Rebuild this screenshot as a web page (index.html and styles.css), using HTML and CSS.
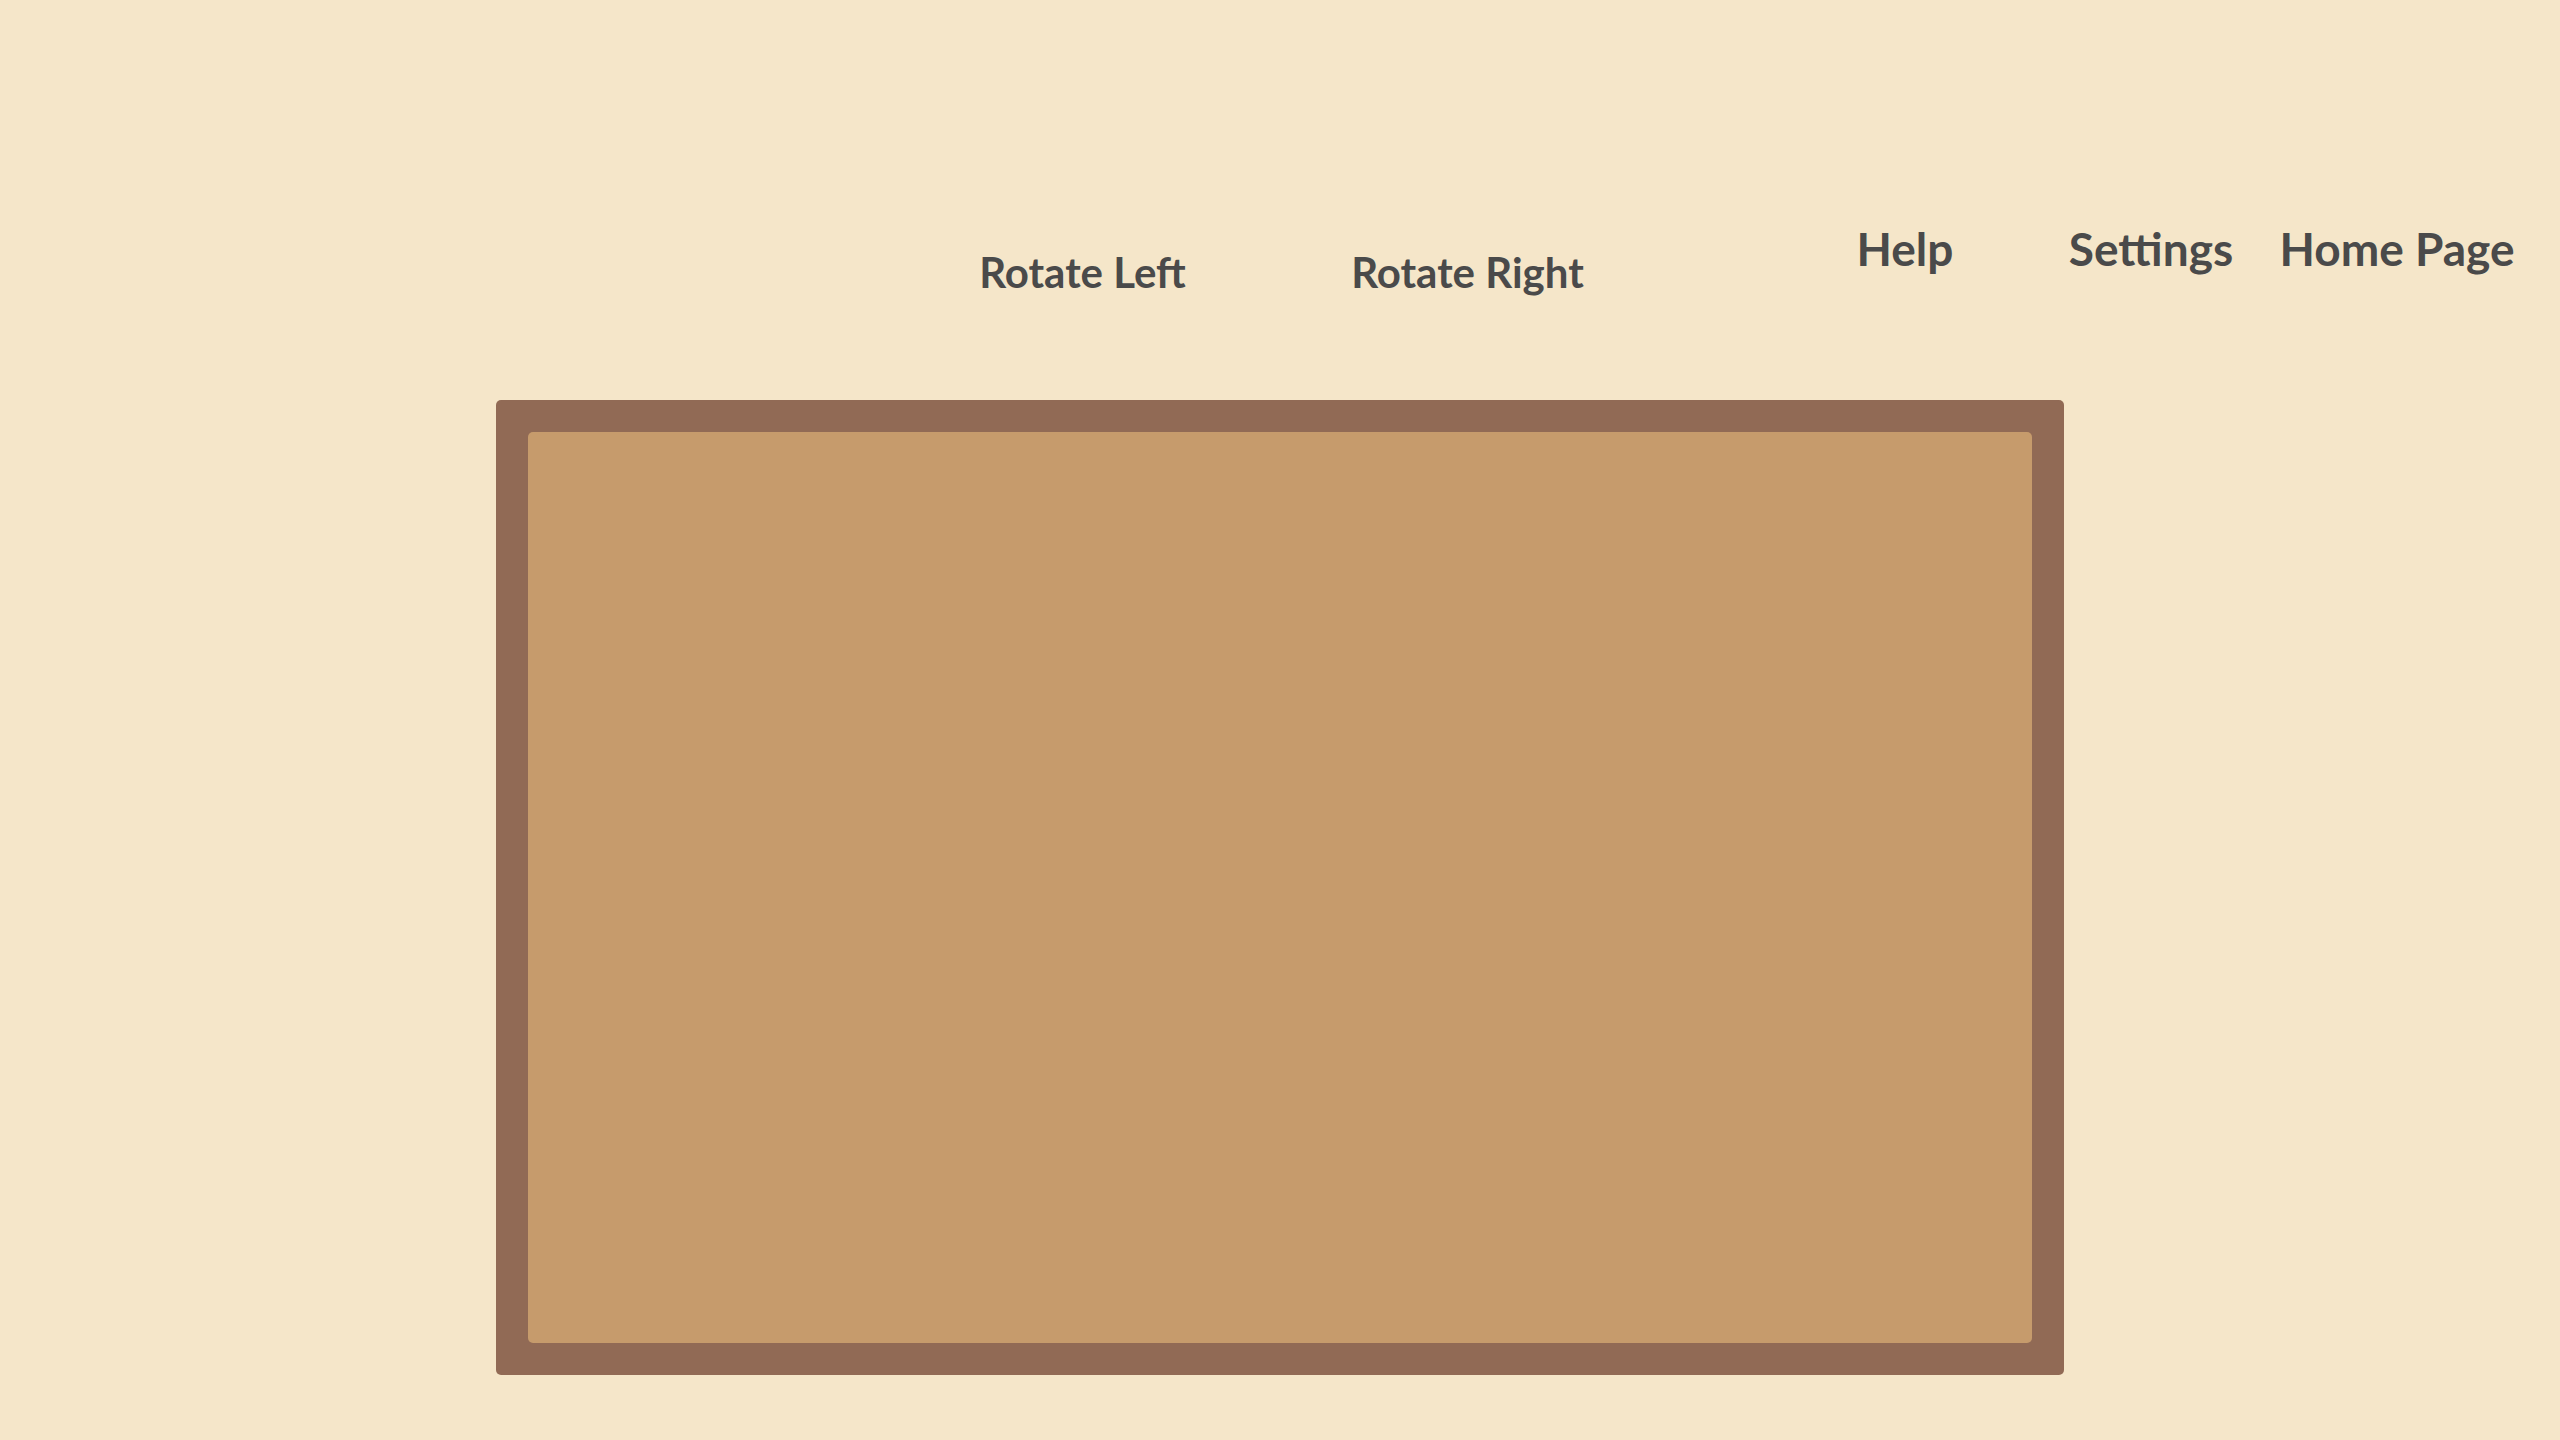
FILE: index.html
```html
<!DOCTYPE html>
<html lang="en">
<head>
<meta charset="utf-8">
<title>Puzzle</title>
<link rel="stylesheet" href="styles.css">
</head>
<body>
<header class="topbar">
  <div class="spacer"></div>
  <div class="rotate-group">
    <button class="btn rotate">Rotate Left</button>
    <button class="btn rotate">Rotate Right</button>
  </div>
  <nav class="nav">
    <a class="nav-link" href="#">Help</a>
    <a class="nav-link" href="#">Settings</a>
    <a class="nav-link" href="#">Home Page</a>
  </nav>
</header>
<main class="main">
  <div class="board">
    <div class="board-inner"></div>
  </div>
</main>
</body>
</html>
```
FILE: styles.css
```css
html, body {
  margin: 0;
  padding: 0;
}
body {
  background: #f5e6c9;
  font-family: "Lato", "Noto Sans", sans-serif;
  color: #4a4a4a;
  width: 2560px;
  height: 1440px;
  overflow: hidden;
}
.topbar {
  display: grid;
  grid-template-columns: 1fr 780px 1fr;
  padding-top: 221px;
  height: 76px;
}
.rotate-group {
  display: flex;
  margin-top: 26px;
  padding-right: 10px;
}
.btn {
  background: none;
  border: none;
  padding: 0;
  margin: 0;
  font-family: inherit;
  color: #4a4a4a;
  cursor: pointer;
}
.rotate {
  width: 390px;
  text-align: center;
  font-size: 42px;
  font-weight: 700;
  line-height: 1.2;
}
.nav {
  display: flex;
  justify-content: flex-end;
  padding-right: 40px;
  align-items: flex-start;
}
.nav-link {
  width: 246px;
  text-align: center;
  font-size: 46px;
  font-weight: 700;
  line-height: 1.2;
  color: #4a4a4a;
  text-decoration: none;
}
.main {
  padding-top: 103px;
}
.board {
  width: 1568px;
  height: 975px;
  margin: 0 auto;
  box-sizing: border-box;
  padding: 32px;
  background: #916a55;
  border-radius: 5px;
}
.board-inner {
  width: 100%;
  height: 100%;
  background: #c69b6c;
  border-radius: 5px;
}
```
